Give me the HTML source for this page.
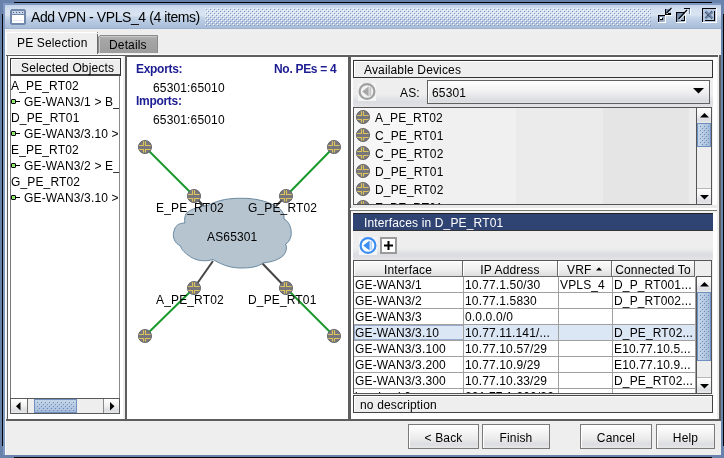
<!DOCTYPE html>
<html><head><meta charset="utf-8">
<style>
*{margin:0;padding:0;box-sizing:border-box}
html,body{width:724px;height:458px;overflow:hidden;will-change:transform;background:#6882ab;font-family:"Liberation Sans",sans-serif;font-size:12px;color:#000}
.a{position:absolute}
.t{position:absolute;white-space:nowrap;line-height:12px;letter-spacing:0.15px}
svg{position:absolute;overflow:visible}
</style></head><body>
<div class="a" style="left:3px;top:3px;width:2px;height:452px;background:#7e98c0"></div>
<div class="a" style="left:3px;top:3px;width:718px;height:2px;background:#7e98c0"></div>
<div class="a" style="left:14px;top:2px;width:698px;height:1px;background:#000"></div>
<div class="a" style="left:2px;top:14px;width:1px;height:432px;background:#000"></div>
<div class="a" style="left:723px;top:14px;width:1px;height:432px;background:#000"></div>
<div class="a" style="left:14px;top:457px;width:698px;height:1px;background:#000"></div>
<div class="a" style="left:5px;top:5px;width:716px;height:24px;background:linear-gradient(#c3d2e8 0px,#d3dff0 4px,#dae4f2 10px,#c9d7ea 12px,#b9cbe3 16px,#a9bcd8 23px,#8ea4c6 24px)"></div>
<svg style="left:205px;top:8px" width="446" height="18">
 <defs><pattern id="bp" width="4" height="4" patternUnits="userSpaceOnUse">
  <rect x="0" y="0" width="1" height="1" fill="#fff"/><rect x="2" y="2" width="1" height="1" fill="#fff"/>
  <rect x="1" y="1" width="1" height="1" fill="#8096ba"/><rect x="3" y="3" width="1" height="1" fill="#8096ba"/>
 </pattern></defs>
 <rect width="446" height="18" fill="url(#bp)"/>
</svg>
<svg style="left:10px;top:9px" width="16" height="16">
 <path d="M1.5 0 H14.5 L16 1.5 V14.5 L14.5 16 H1.5 L0 14.5 V1.5 Z" fill="#7089ab"/>
 <rect x="2" y="2" width="12" height="3" fill="#c4d3ea"/>
 <rect x="3" y="3" width="1" height="1" fill="#4c5d78"/><rect x="6" y="3" width="1" height="1" fill="#4c5d78"/><rect x="9" y="3" width="1" height="1" fill="#4c5d78"/><rect x="12" y="3" width="1" height="1" fill="#4c5d78"/>
 <rect x="2" y="6" width="12" height="8" fill="#fff"/>
 <rect x="3" y="11" width="10" height="1" fill="#e4e7ef"/>
</svg>
<div class="t" style="left:31px;top:11px;font-size:14px;letter-spacing:-0.42px">Add VPN - VPLS_4 (4 items)</div>
<svg style="left:654px;top:4px" width="70" height="24">
 <defs><linearGradient id="ig" x1="0" y1="0" x2="1" y2="1"><stop offset="0" stop-color="#62779a"/><stop offset="1" stop-color="#b4c4dc"/></linearGradient></defs>
 <!-- iconify -->
 <rect x="4" y="11" width="8" height="8" fill="#fff"/>
 <rect x="4" y="11" width="7" height="7" fill="#000"/>
 <rect x="5" y="12" width="6" height="6" fill="url(#ig)"/>
 <rect x="6" y="13" width="2" height="2" fill="#fff"/>
 <rect x="8" y="14" width="1" height="2" fill="#000"/><rect x="6" y="15" width="3" height="1" fill="#000"/>
 <path d="M11 5 H12 V10 H17 V11 H11 Z" fill="#000"/>
 <path d="M12 5 H17 V10 H12 Z" fill="url(#ig)"/>
 <path d="M12.5 9 L17.5 4" stroke="#000" stroke-width="1.1"/>
 <path d="M13.5 10 L18 5.5" stroke="#fff" stroke-width="0.9"/>
 <rect x="14" y="9" width="3" height="1" fill="#000"/>
 <rect x="12" y="11" width="6" height="1" fill="#fff"/>
 <!-- maximize -->
 <rect x="22" y="8" width="10" height="11" fill="#fff"/>
 <rect x="22" y="8" width="9" height="10" fill="#000"/>
 <rect x="23" y="9" width="8" height="9" fill="url(#ig)"/>
 <rect x="30" y="12" width="1" height="5" fill="#000"/><rect x="27" y="16" width="4" height="1" fill="#000"/>
 <path d="M24.5 15 L33 6" stroke="#000" stroke-width="1.1"/>
 <path d="M25.5 16 L34 7" stroke="#fff" stroke-width="0.9"/>
 <rect x="30" y="4" width="6" height="1" fill="#000"/>
 <rect x="35" y="5" width="1" height="5" fill="#6c809f"/>
 <rect x="36" y="5" width="1" height="6" fill="#fff"/>
 <!-- close -->
 <rect x="48" y="4" width="15" height="15" fill="#fff"/>
 <rect x="48" y="4" width="14" height="14" fill="#000"/>
 <rect x="49" y="5" width="13" height="13" fill="#b6c7df"/>
 <rect x="60" y="7" width="1" height="10" fill="#000"/><rect x="51" y="16" width="10" height="1" fill="#000"/>
 <path d="M51.5 7.5 L58.5 14.5 M58.5 7.5 L51.5 14.5" stroke="#6f86a8" stroke-width="2.6"/>
 <path d="M51 8 L57.5 14.5" stroke="#2a3240" stroke-width="0.9" stroke-dasharray="1 1"/>
 <path d="M58 7 L51 14" stroke="#2a3240" stroke-width="0.9" stroke-dasharray="1 1"/>
</svg>
<div class="a" style="left:5px;top:29px;width:716px;height:426px;background:#eeeeee"></div>
<div class="a" style="left:5px;top:29px;width:1px;height:426px;background:#fff"></div>
<div class="a" style="left:6px;top:32px;width:92px;height:24px;background:#eeeeee;border-top:1px solid #fff;border-left:1px solid #fff"></div>
<div class="a" style="left:97px;top:34px;width:1px;height:20px;background:#6a6a6a"></div>
<div class="a" style="left:97px;top:32px;width:1px;height:1px;background:#888"></div>
<div class="t" style="left:17px;top:37px;">PE Selection</div>
<svg style="left:98px;top:35px" width="62" height="18">
 <defs><linearGradient id="tg" x1="0" y1="0" x2="0" y2="1"><stop offset="0" stop-color="#b4b4b4"/><stop offset="0.25" stop-color="#a6a6a6"/><stop offset="1" stop-color="#9c9c9c"/></linearGradient></defs>
 <path d="M0.5 18 V2 L2 0.5 H59.5 V18" fill="url(#tg)" stroke="#8a8a8a" stroke-width="1"/>
 <path d="M1.5 18 V2.5 L2.5 1.5 H58.5" fill="none" stroke="#c8c8c8" stroke-width="1"/>
</svg>
<div class="t" style="left:109px;top:39px;">Details</div>
<div class="a" style="left:6px;top:55px;width:712px;height:1px;background:#5a5a5a"></div>
<div class="a" style="left:6px;top:54px;width:712px;height:1px;background:#fafafa"></div>
<div class="a" style="left:7px;top:55px;width:1px;height:365px;background:#5a5a5a"></div>
<div class="a" style="left:8px;top:56px;width:115px;height:363px;background:#fff"></div>
<div class="a" style="left:10px;top:58px;width:110px;height:356px;background:#eee"></div>
<div class="a" style="left:10px;top:58px;width:111px;height:18px;background:#eee;border:1px solid #333;border-bottom:2px solid #444"></div>
<div class="a" style="left:11px;top:59px;width:109px;height:1px;background:#fff"></div>
<div class="a" style="left:11px;top:59px;width:1px;height:15px;background:#fff"></div>
<div class="t" style="left:21px;top:62px;">Selected Objects</div>
<div class="a" style="left:10px;top:76px;width:110px;height:322px;background:#fff;border-left:1px solid #777;border-right:1px solid #8a8a8a"></div>
<div class="a" style="left:11px;top:76px;width:108px;height:322px;overflow:hidden">
<div class="t" style="left:0px;top:4px;">A_PE_RT02</div>
<div class="t" style="left:13px;top:20px;">GE-WAN3/1 &gt; B_PE_RT01</div>
<div class="t" style="left:0px;top:36px;">D_PE_RT01</div>
<div class="t" style="left:13px;top:52px;">GE-WAN3/3.10 &gt; D_PE</div>
<div class="t" style="left:0px;top:68px;">E_PE_RT02</div>
<div class="t" style="left:13px;top:84px;">GE-WAN3/2 &gt; E_PE_RT</div>
<div class="t" style="left:0px;top:100px;">G_PE_RT02</div>
<div class="t" style="left:13px;top:116px;">GE-WAN3/3.10 &gt; G_PE</div>
</div>
<svg style="left:11px;top:99px" width="10" height="5"><path d="M1 0 H4 L5 1 V4 L4 5 H1 L0 4 V1 Z" fill="#000"/><rect x="1" y="1" width="3" height="3" fill="#8cf06a"/><rect x="5" y="2" width="4" height="1" fill="#000"/></svg>
<svg style="left:11px;top:131px" width="10" height="5"><path d="M1 0 H4 L5 1 V4 L4 5 H1 L0 4 V1 Z" fill="#000"/><rect x="1" y="1" width="3" height="3" fill="#8cf06a"/><rect x="5" y="2" width="4" height="1" fill="#000"/></svg>
<svg style="left:11px;top:163px" width="10" height="5"><path d="M1 0 H4 L5 1 V4 L4 5 H1 L0 4 V1 Z" fill="#000"/><rect x="1" y="1" width="3" height="3" fill="#8cf06a"/><rect x="5" y="2" width="4" height="1" fill="#000"/></svg>
<svg style="left:11px;top:195px" width="10" height="5"><path d="M1 0 H4 L5 1 V4 L4 5 H1 L0 4 V1 Z" fill="#000"/><rect x="1" y="1" width="3" height="3" fill="#8cf06a"/><rect x="5" y="2" width="4" height="1" fill="#000"/></svg>
<div class="a" style="left:10px;top:398px;width:110px;height:16px;background:#eee;border:1px solid #5a5a5a"></div>
<div class="a" style="left:11px;top:399px;width:16px;height:14px;background:linear-gradient(#fff,#f2f2f2 45%,#dcdde2 80%,#e9e9e9)"></div>
<div class="a" style="left:27px;top:399px;width:1px;height:14px;background:#6a6a6a"></div>
<svg style="left:16px;top:402px" width="5" height="9"><path d="M4.5 0 V8.5 L0 4.25 Z" fill="#000"/></svg>
<div class="a" style="left:103px;top:399px;width:1px;height:14px;background:#8a8a8a"></div>
<div class="a" style="left:104px;top:399px;width:15px;height:14px;background:linear-gradient(#fff,#f2f2f2 45%,#dcdde2 80%,#e9e9e9)"></div>
<svg style="left:110px;top:402px" width="5" height="9"><path d="M0 0 V8.5 L4.5 4.25 Z" fill="#000"/></svg>
<div class="a" style="left:34px;top:399px;width:43px;height:14px;background:linear-gradient(#c4d6e9,#a3bad9);border:1px solid #6f8fc0"></div>
<svg style="left:36px;top:401px" width="39" height="10"><defs><pattern id="tb" width="4" height="4" patternUnits="userSpaceOnUse"><rect x="0" y="0" width="1" height="1" fill="#d0def0" fill-opacity="0.5"/><rect x="2" y="2" width="1" height="1" fill="#d0def0" fill-opacity="0.5"/><rect x="1" y="1" width="1" height="1" fill="#6f8ab6"/><rect x="3" y="3" width="1" height="1" fill="#6f8ab6"/></pattern></defs><rect width="39" height="10" fill="url(#tb)"/></svg>
<div class="a" style="left:125px;top:55px;width:224px;height:365px;background:#fff"></div>
<div class="a" style="left:125px;top:55px;width:2px;height:365px;background:#5e5e5e"></div>
<div class="a" style="left:125px;top:55px;width:224px;height:2px;background:#5e5e5e"></div>
<div class="a" style="left:348px;top:55px;width:1px;height:364px;background:#5e5e5e"></div>
<div class="t" style="left:136px;top:63px;font-weight:bold;color:#1c1c92;letter-spacing:-0.3px">Exports:</div>
<div class="t" style="left:274px;top:63px;font-weight:bold;color:#1c1c92;letter-spacing:-0.3px">No. PEs = 4</div>
<div class="t" style="left:153px;top:82px;">65301:65010</div>
<div class="t" style="left:136px;top:95px;font-weight:bold;color:#1c1c92;letter-spacing:-0.3px">Imports:</div>
<div class="t" style="left:153px;top:114px;">65301:65010</div>
<svg style="left:0;top:0" width="724" height="458">
  <line x1="145" y1="147" x2="194" y2="196" stroke="#19992c" stroke-width="2"/>
  <line x1="334" y1="147" x2="286" y2="196" stroke="#19992c" stroke-width="2"/>
  <line x1="145" y1="336" x2="194" y2="288" stroke="#19992c" stroke-width="2"/>
  <line x1="334" y1="336" x2="286" y2="288" stroke="#19992c" stroke-width="2"/>
  <line x1="194" y1="196" x2="204" y2="206" stroke="#444" stroke-width="2"/>
  <line x1="286" y1="196" x2="276" y2="206" stroke="#444" stroke-width="2"/>
  <line x1="213" y1="261" x2="194" y2="288" stroke="#444" stroke-width="2"/>
  <line x1="262" y1="263" x2="286" y2="288" stroke="#444" stroke-width="2"/>
  <path d="M241.6,198.3 C256,198 272,202 281,210 Q285,214 284,219 C290,222 292,230 291,236 C290,240 288,243 285.6,244 C288,249 285,256 279,258.5 C275,261 270,262 263,263 C258,267 250,268 241,268 C232,268 224,266 213,259.5 C205,262 195,261 188,255 C184,252 181,249 180.6,246 C174,243 172,236 174.3,230 C176,224 181,223 185,223 C184,220 185,216 186,213.5 C192,208 200,207 209,205 C218,200 230,198 241.6,198.3 Z" fill="#b5c4cf" stroke="#6a8aa2" stroke-width="1"/>
</svg>
<svg style="left:138px;top:140px" width="14" height="14"><circle cx="7" cy="7" r="6.6" fill="#76767c" stroke="#5c5c60" stroke-width="0.8"/><path d="M5.5 1.2 V5.5 H1.2 M7.5 1.2 V5.5 H12.6 M5.5 12.6 V9.5 H1.2 M7.5 12.6 V9.5 H12.6" stroke="#dcc35c" stroke-width="1.15" fill="none"/></svg>
<svg style="left:327px;top:140px" width="14" height="14"><circle cx="7" cy="7" r="6.6" fill="#76767c" stroke="#5c5c60" stroke-width="0.8"/><path d="M5.5 1.2 V5.5 H1.2 M7.5 1.2 V5.5 H12.6 M5.5 12.6 V9.5 H1.2 M7.5 12.6 V9.5 H12.6" stroke="#dcc35c" stroke-width="1.15" fill="none"/></svg>
<svg style="left:187px;top:189px" width="14" height="14"><circle cx="7" cy="7" r="6.6" fill="#76767c" stroke="#5c5c60" stroke-width="0.8"/><path d="M5.5 1.2 V5.5 H1.2 M7.5 1.2 V5.5 H12.6 M5.5 12.6 V9.5 H1.2 M7.5 12.6 V9.5 H12.6" stroke="#dcc35c" stroke-width="1.15" fill="none"/></svg>
<svg style="left:279px;top:189px" width="14" height="14"><circle cx="7" cy="7" r="6.6" fill="#76767c" stroke="#5c5c60" stroke-width="0.8"/><path d="M5.5 1.2 V5.5 H1.2 M7.5 1.2 V5.5 H12.6 M5.5 12.6 V9.5 H1.2 M7.5 12.6 V9.5 H12.6" stroke="#dcc35c" stroke-width="1.15" fill="none"/></svg>
<svg style="left:187px;top:281px" width="14" height="14"><circle cx="7" cy="7" r="6.6" fill="#76767c" stroke="#5c5c60" stroke-width="0.8"/><path d="M5.5 1.2 V5.5 H1.2 M7.5 1.2 V5.5 H12.6 M5.5 12.6 V9.5 H1.2 M7.5 12.6 V9.5 H12.6" stroke="#dcc35c" stroke-width="1.15" fill="none"/></svg>
<svg style="left:279px;top:281px" width="14" height="14"><circle cx="7" cy="7" r="6.6" fill="#76767c" stroke="#5c5c60" stroke-width="0.8"/><path d="M5.5 1.2 V5.5 H1.2 M7.5 1.2 V5.5 H12.6 M5.5 12.6 V9.5 H1.2 M7.5 12.6 V9.5 H12.6" stroke="#dcc35c" stroke-width="1.15" fill="none"/></svg>
<svg style="left:138px;top:329px" width="14" height="14"><circle cx="7" cy="7" r="6.6" fill="#76767c" stroke="#5c5c60" stroke-width="0.8"/><path d="M5.5 1.2 V5.5 H1.2 M7.5 1.2 V5.5 H12.6 M5.5 12.6 V9.5 H1.2 M7.5 12.6 V9.5 H12.6" stroke="#dcc35c" stroke-width="1.15" fill="none"/></svg>
<svg style="left:327px;top:329px" width="14" height="14"><circle cx="7" cy="7" r="6.6" fill="#76767c" stroke="#5c5c60" stroke-width="0.8"/><path d="M5.5 1.2 V5.5 H1.2 M7.5 1.2 V5.5 H12.6 M5.5 12.6 V9.5 H1.2 M7.5 12.6 V9.5 H12.6" stroke="#dcc35c" stroke-width="1.15" fill="none"/></svg>
<div class="t" style="left:156px;top:202px;">E_PE_RT02</div>
<div class="t" style="left:248px;top:202px;">G_PE_RT02</div>
<div class="t" style="left:207px;top:231px;">AS65301</div>
<div class="t" style="left:156px;top:294px;">A_PE_RT02</div>
<div class="t" style="left:248px;top:294px;">D_PE_RT01</div>
<div class="a" style="left:349px;top:55px;width:372px;height:365px;background:#eee"></div>
<div class="a" style="left:349px;top:55px;width:2px;height:365px;background:#5e5e5e"></div>
<div class="a" style="left:349px;top:55px;width:369px;height:2px;background:#5e5e5e"></div>
<div class="a" style="left:351px;top:57px;width:366px;height:362px;background:#fff"></div>
<div class="a" style="left:353px;top:59px;width:360px;height:354px;background:#eee"></div>
<div class="a" style="left:353px;top:60px;width:360px;height:18px;background:#eee;border:1px solid #333"></div>
<div class="a" style="left:354px;top:61px;width:358px;height:1px;background:#fff"></div>
<div class="a" style="left:354px;top:61px;width:1px;height:16px;background:#fff"></div>
<div class="t" style="left:364px;top:64px;">Available Devices</div>
<div class="a" style="left:353px;top:78px;width:360px;height:29px;background:linear-gradient(#eeeeee 0px,#eeeeee 16px,#dadce1 24px,#e3e3e6 28px)"></div>
<div class="a" style="left:358px;top:83px;width:18px;height:18px;background:#f4f4f4"></div>
<svg style="left:358px;top:83px" width="18" height="18">
 <circle cx="9" cy="8.5" r="7.4" fill="#f2f2f2" stroke="#a0a0a0" stroke-width="2.2"/>
 <path d="M4.2 8.5 L10.6 3.6 V13.4 Z" fill="#a6a6a6"/>
 <rect x="11.4" y="4.2" width="1.8" height="8.6" fill="#c4c4c4"/>
</svg>
<div class="t" style="left:400px;top:87px;">AS:</div>
<div class="a" style="left:427px;top:80px;width:283px;height:24px;border:1px solid #606060;background:linear-gradient(#ffffff 0px,#f1f1f1 10px,#e4e5e9 16px,#d9dbe0 20px,#e6e6e6 23px)"></div>
<div class="a" style="left:428px;top:81px;width:281px;height:1px;background:#fff"></div>
<div class="a" style="left:428px;top:81px;width:1px;height:22px;background:#fff"></div>
<div class="t" style="left:432px;top:87px;">65301</div>
<svg style="left:693px;top:88px" width="12" height="7"><path d="M0 0 H11 L5.5 5.5 Z" fill="#000"/></svg>
<div class="a" style="left:353px;top:107px;width:343px;height:98px;border-top:1px solid #555;border-left:1px solid #555;border-bottom:1px solid #555;background:linear-gradient(90deg,#f6f6f6 0px,#f6f6f6 77px,#f0f0f0 77px,#f0f0f0 162px,#ebebeb 162px,#ebebeb 249px,#e5e5e5 249px,#e5e5e5 335px,#ececec 335px)"></div>
<div class="a" style="left:354px;top:108px;width:342px;height:96px;overflow:hidden">
<svg style="left:2px;top:2px" width="14" height="14"><circle cx="7" cy="7" r="6.6" fill="#76767c" stroke="#5c5c60" stroke-width="0.8"/><path d="M5.5 1.2 V5.5 H1.2 M7.5 1.2 V5.5 H12.6 M5.5 12.6 V9.5 H1.2 M7.5 12.6 V9.5 H12.6" stroke="#dcc35c" stroke-width="1.15" fill="none"/></svg>
<div class="t" style="left:21px;top:4px;">A_PE_RT02</div>
<svg style="left:2px;top:20px" width="14" height="14"><circle cx="7" cy="7" r="6.6" fill="#76767c" stroke="#5c5c60" stroke-width="0.8"/><path d="M5.5 1.2 V5.5 H1.2 M7.5 1.2 V5.5 H12.6 M5.5 12.6 V9.5 H1.2 M7.5 12.6 V9.5 H12.6" stroke="#dcc35c" stroke-width="1.15" fill="none"/></svg>
<div class="t" style="left:21px;top:22px;">C_PE_RT01</div>
<svg style="left:2px;top:38px" width="14" height="14"><circle cx="7" cy="7" r="6.6" fill="#76767c" stroke="#5c5c60" stroke-width="0.8"/><path d="M5.5 1.2 V5.5 H1.2 M7.5 1.2 V5.5 H12.6 M5.5 12.6 V9.5 H1.2 M7.5 12.6 V9.5 H12.6" stroke="#dcc35c" stroke-width="1.15" fill="none"/></svg>
<div class="t" style="left:21px;top:40px;">C_PE_RT02</div>
<svg style="left:2px;top:56px" width="14" height="14"><circle cx="7" cy="7" r="6.6" fill="#76767c" stroke="#5c5c60" stroke-width="0.8"/><path d="M5.5 1.2 V5.5 H1.2 M7.5 1.2 V5.5 H12.6 M5.5 12.6 V9.5 H1.2 M7.5 12.6 V9.5 H12.6" stroke="#dcc35c" stroke-width="1.15" fill="none"/></svg>
<div class="t" style="left:21px;top:58px;">D_PE_RT01</div>
<svg style="left:2px;top:74px" width="14" height="14"><circle cx="7" cy="7" r="6.6" fill="#76767c" stroke="#5c5c60" stroke-width="0.8"/><path d="M5.5 1.2 V5.5 H1.2 M7.5 1.2 V5.5 H12.6 M5.5 12.6 V9.5 H1.2 M7.5 12.6 V9.5 H12.6" stroke="#dcc35c" stroke-width="1.15" fill="none"/></svg>
<div class="t" style="left:21px;top:76px;">D_PE_RT02</div>
<svg style="left:2px;top:92px" width="14" height="14"><circle cx="7" cy="7" r="6.6" fill="#76767c" stroke="#5c5c60" stroke-width="0.8"/><path d="M5.5 1.2 V5.5 H1.2 M7.5 1.2 V5.5 H12.6 M5.5 12.6 V9.5 H1.2 M7.5 12.6 V9.5 H12.6" stroke="#dcc35c" stroke-width="1.15" fill="none"/></svg>
<div class="t" style="left:21px;top:94px;">E_PE_RT01</div>
</div>
<div class="a" style="left:696px;top:107px;width:16px;height:98px;background:#eeeeee;border:1px solid #555"></div>
<div class="a" style="left:697px;top:108px;width:14px;height:15px;background:linear-gradient(#fff,#f2f2f2 45%,#dcdde2 80%,#e9e9e9)"></div>
<div class="a" style="left:697px;top:123px;width:14px;height:1px;background:#b8b8b8"></div>
<svg style="left:700px;top:113px" width="9" height="5"><path d="M0 4.5 H9 L4.5 0 Z" fill="#000"/></svg>
<div class="a" style="left:697px;top:189px;width:14px;height:15px;background:linear-gradient(#fff,#f2f2f2 45%,#dcdde2 80%,#e9e9e9)"></div>
<div class="a" style="left:697px;top:188px;width:14px;height:1px;background:#b8b8b8"></div>
<svg style="left:700px;top:195px" width="9" height="5"><path d="M0 0 H9 L4.5 4.5 Z" fill="#000"/></svg>
<div class="a" style="left:697px;top:123px;width:14px;height:24px;background:linear-gradient(90deg,#c4d6e9,#a3bad9);border:1px solid #6f8fc0"></div>
<svg style="left:699px;top:125px" width="10" height="20"><defs><pattern id="vb107" width="4" height="4" patternUnits="userSpaceOnUse"><rect x="0" y="0" width="1" height="1" fill="#d0def0" fill-opacity="0.5"/><rect x="2" y="2" width="1" height="1" fill="#d0def0" fill-opacity="0.5"/><rect x="1" y="1" width="1" height="1" fill="#6f8ab6"/><rect x="3" y="3" width="1" height="1" fill="#6f8ab6"/></pattern></defs><rect width="10" height="20" fill="url(#vb107)"/></svg>
<div class="a" style="left:351px;top:205px;width:366px;height:8px;background:#e9e9e9"></div>
<div class="a" style="left:350px;top:208px;width:367px;height:2px;background:#fff"></div>
<div class="a" style="left:351px;top:210px;width:366px;height:1px;background:#7a7a7a"></div>
<div class="a" style="left:351px;top:211px;width:366px;height:2px;background:#f2f2f2"></div>
<div class="a" style="left:353px;top:213px;width:360px;height:18px;background:#304473;border-top:1px solid #222;border-bottom:1px solid #333"></div>
<div class="t" style="left:364px;top:217px;color:#fff">Interfaces in D_PE_RT01</div>
<div class="a" style="left:353px;top:231px;width:360px;height:29px;background:linear-gradient(#eeeeee 0px,#eeeeee 17px,#dadce1 24px,#e3e3e6 28px)"></div>
<div class="a" style="left:359px;top:237px;width:18px;height:18px;background:#f6f6f6"></div>
<svg style="left:359px;top:237px" width="18" height="18">
 <circle cx="9" cy="8.5" r="7.4" fill="#fff" stroke="#3c8ef2" stroke-width="2.2"/>
 <path d="M4.2 8.5 L10.6 3.6 V13.4 Z" fill="#3c8ef2"/>
 <rect x="11.4" y="4.2" width="1.8" height="8.6" fill="#b0d0f7"/>
</svg>
<div class="a" style="left:380px;top:237px;width:17px;height:17px;background:#fff;border:2px solid #9a9a9a"></div>
<svg style="left:382px;top:239px" width="13" height="13"><path d="M6.5 2 V11 M2 6.5 H11" stroke="#000" stroke-width="2"/></svg>
<div class="a" style="left:353px;top:260px;width:343px;height:134px;background:#fff;border-top:1px solid #555;border-left:1px solid #555;border-bottom:1px solid #555;overflow:hidden">
<div class="a" style="left:0px;top:0;width:109px;height:16px;border-right:1px solid #6a6a6a;border-bottom:1px solid #6a6a6a;box-shadow:inset 1px 1px 0 #fff;background:linear-gradient(#fbfbfb,#efefef 55%,#dedede)"><div class="t" style="left:0;right:0;top:3px;text-align:center">Interface</div></div>
<div class="a" style="left:109px;top:0;width:95px;height:16px;border-right:1px solid #6a6a6a;border-bottom:1px solid #6a6a6a;box-shadow:inset 1px 1px 0 #fff;background:linear-gradient(#fbfbfb,#efefef 55%,#dedede)"><div class="t" style="left:0;right:0;top:3px;text-align:center">IP Address</div></div>
<div class="a" style="left:204px;top:0;width:54px;height:16px;border-right:1px solid #6a6a6a;border-bottom:1px solid #6a6a6a;box-shadow:inset 1px 1px 0 #fff;background:linear-gradient(#fbfbfb,#efefef 55%,#dedede)"><div class="t" style="left:9px;top:3px">VRF</div><svg style="left:38px;top:6px" width="6" height="4"><path d="M0 3.5 H6 L3 0.3 Z" fill="#000"/></svg></div>
<div class="a" style="left:258px;top:0;width:83px;height:16px;border-right:1px solid #6a6a6a;border-bottom:1px solid #6a6a6a;box-shadow:inset 1px 1px 0 #fff;background:linear-gradient(#fbfbfb,#efefef 55%,#dedede)"><div class="t" style="left:0;right:0;top:3px;text-align:center">Connected To</div></div>
<div class="t" style="left:1px;top:18px;">GE-WAN3/1</div>
<div class="t" style="left:111px;top:18px;">10.77.1.50/30</div>
<div class="t" style="left:206px;top:18px;">VPLS_4</div>
<div class="t" style="left:260px;top:18px;">D_P_RT001...</div>
<div class="t" style="left:1px;top:34px;">GE-WAN3/2</div>
<div class="t" style="left:111px;top:34px;">10.77.1.5830</div>
<div class="t" style="left:206px;top:34px;"></div>
<div class="t" style="left:260px;top:34px;">D_P_RT002...</div>
<div class="t" style="left:1px;top:50px;">GE-WAN3/3</div>
<div class="t" style="left:111px;top:50px;">0.0.0.0/0</div>
<div class="t" style="left:206px;top:50px;"></div>
<div class="t" style="left:260px;top:50px;"></div>
<div class="a" style="left:0px;top:64px;width:342px;height:15px;background:#dce7f5"></div>
<div class="a" style="left:0px;top:64px;width:110px;height:15px;border:1px solid #99aacc"></div>
<div class="t" style="left:1px;top:66px;">GE-WAN3/3.10</div>
<div class="t" style="left:111px;top:66px;">10.77.11.141/...</div>
<div class="t" style="left:206px;top:66px;"></div>
<div class="t" style="left:260px;top:66px;">D_PE_RT02...</div>
<div class="t" style="left:1px;top:82px;">GE-WAN3/3.100</div>
<div class="t" style="left:111px;top:82px;">10.77.10.57/29</div>
<div class="t" style="left:206px;top:82px;"></div>
<div class="t" style="left:260px;top:82px;">E10.77.10.5...</div>
<div class="t" style="left:1px;top:98px;">GE-WAN3/3.200</div>
<div class="t" style="left:111px;top:98px;">10.77.10.9/29</div>
<div class="t" style="left:206px;top:98px;"></div>
<div class="t" style="left:260px;top:98px;">E10.77.10.9...</div>
<div class="t" style="left:1px;top:114px;">GE-WAN3/3.300</div>
<div class="t" style="left:111px;top:114px;">10.77.10.33/29</div>
<div class="t" style="left:206px;top:114px;"></div>
<div class="t" style="left:260px;top:114px;">D_PE_RT02...</div>
<div class="t" style="left:1px;top:130px;">loopback0</div>
<div class="t" style="left:111px;top:130px;">201.77.1.200/32</div>
<div class="t" style="left:206px;top:130px;"></div>
<div class="t" style="left:260px;top:130px;"></div>
<div class="a" style="left:109px;top:16px;width:1px;height:120px;background:#a0a0a0"></div>
<div class="a" style="left:204px;top:16px;width:1px;height:120px;background:#a0a0a0"></div>
<div class="a" style="left:258px;top:16px;width:1px;height:120px;background:#a0a0a0"></div>
<div class="a" style="left:341px;top:16px;width:1px;height:120px;background:#a0a0a0"></div>
<div class="a" style="left:0px;top:31px;width:342px;height:1px;background:#a0a0a0"></div>
<div class="a" style="left:0px;top:47px;width:342px;height:1px;background:#a0a0a0"></div>
<div class="a" style="left:0px;top:63px;width:342px;height:1px;background:#a0a0a0"></div>
<div class="a" style="left:0px;top:79px;width:342px;height:1px;background:#a0a0a0"></div>
<div class="a" style="left:0px;top:95px;width:342px;height:1px;background:#a0a0a0"></div>
<div class="a" style="left:0px;top:111px;width:342px;height:1px;background:#a0a0a0"></div>
<div class="a" style="left:0px;top:127px;width:342px;height:1px;background:#a0a0a0"></div>
<div class="a" style="left:0px;top:143px;width:342px;height:1px;background:#a0a0a0"></div>
</div>
<div class="a" style="left:695px;top:260px;width:17px;height:17px;background:#eeeeee;border-top:1px solid #555;border-right:1px solid #555"></div>
<div class="a" style="left:696px;top:276px;width:16px;height:118px;background:#eeeeee;border:1px solid #555"></div>
<div class="a" style="left:697px;top:277px;width:14px;height:15px;background:linear-gradient(#fff,#f2f2f2 45%,#dcdde2 80%,#e9e9e9)"></div>
<div class="a" style="left:697px;top:292px;width:14px;height:1px;background:#b8b8b8"></div>
<svg style="left:700px;top:282px" width="9" height="5"><path d="M0 4.5 H9 L4.5 0 Z" fill="#000"/></svg>
<div class="a" style="left:697px;top:378px;width:14px;height:15px;background:linear-gradient(#fff,#f2f2f2 45%,#dcdde2 80%,#e9e9e9)"></div>
<div class="a" style="left:697px;top:377px;width:14px;height:1px;background:#b8b8b8"></div>
<svg style="left:700px;top:384px" width="9" height="5"><path d="M0 0 H9 L4.5 4.5 Z" fill="#000"/></svg>
<div class="a" style="left:697px;top:292px;width:14px;height:69px;background:linear-gradient(90deg,#c4d6e9,#a3bad9);border:1px solid #6f8fc0"></div>
<svg style="left:699px;top:294px" width="10" height="65"><defs><pattern id="vb276" width="4" height="4" patternUnits="userSpaceOnUse"><rect x="0" y="0" width="1" height="1" fill="#d0def0" fill-opacity="0.5"/><rect x="2" y="2" width="1" height="1" fill="#d0def0" fill-opacity="0.5"/><rect x="1" y="1" width="1" height="1" fill="#6f8ab6"/><rect x="3" y="3" width="1" height="1" fill="#6f8ab6"/></pattern></defs><rect width="10" height="65" fill="url(#vb276)"/></svg>
<div class="a" style="left:353px;top:395px;width:360px;height:18px;background:#eee;border:1px solid #444"></div>
<div class="a" style="left:354px;top:396px;width:358px;height:1px;background:#fff"></div>
<div class="a" style="left:354px;top:396px;width:1px;height:16px;background:#fff"></div>
<div class="t" style="left:360px;top:399px;">no description</div>
<div class="a" style="left:6px;top:419px;width:714px;height:2px;background:#5e5e5e"></div>
<div class="a" style="left:719px;top:55px;width:2px;height:366px;background:#5e5e5e"></div>
<div class="a" style="left:408px;top:424px;width:71px;height:25px;border:1px solid #7a7a7a;background:linear-gradient(#ffffff 0px,#f4f4f4 8px,#ebebeb 14px,#dcdde2 19px,#e6e6e6 23px)"></div>
<div class="a" style="left:409px;top:425px;width:69px;height:1px;background:#fff"></div>
<div class="a" style="left:409px;top:425px;width:1px;height:23px;background:#fff"></div>
<div class="t" style="left:408px;top:432px;width:71px;text-align:center">&lt; Back</div>
<div class="a" style="left:482px;top:424px;width:68px;height:25px;border:1px solid #7a7a7a;background:linear-gradient(#ffffff 0px,#f4f4f4 8px,#ebebeb 14px,#dcdde2 19px,#e6e6e6 23px)"></div>
<div class="a" style="left:483px;top:425px;width:66px;height:1px;background:#fff"></div>
<div class="a" style="left:483px;top:425px;width:1px;height:23px;background:#fff"></div>
<div class="t" style="left:482px;top:432px;width:68px;text-align:center">Finish</div>
<div class="a" style="left:580px;top:424px;width:72px;height:25px;border:1px solid #7a7a7a;background:linear-gradient(#ffffff 0px,#f4f4f4 8px,#ebebeb 14px,#dcdde2 19px,#e6e6e6 23px)"></div>
<div class="a" style="left:581px;top:425px;width:70px;height:1px;background:#fff"></div>
<div class="a" style="left:581px;top:425px;width:1px;height:23px;background:#fff"></div>
<div class="t" style="left:580px;top:432px;width:72px;text-align:center">Cancel</div>
<div class="a" style="left:656px;top:424px;width:59px;height:25px;border:1px solid #7a7a7a;background:linear-gradient(#ffffff 0px,#f4f4f4 8px,#ebebeb 14px,#dcdde2 19px,#e6e6e6 23px)"></div>
<div class="a" style="left:657px;top:425px;width:57px;height:1px;background:#fff"></div>
<div class="a" style="left:657px;top:425px;width:1px;height:23px;background:#fff"></div>
<div class="t" style="left:656px;top:432px;width:59px;text-align:center">Help</div>
</body></html>
